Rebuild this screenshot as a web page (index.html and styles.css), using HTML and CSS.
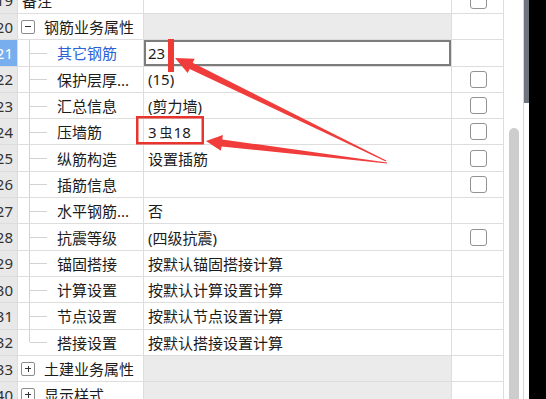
FILE: index.html
```html
<!DOCTYPE html>
<html lang="zh-CN">
<head>
   <meta charset="UTF-8">
   <meta name="viewport" content="width=device-width, initial-scale=1.0">
   <title>属性编辑</title>
   <link rel="stylesheet" href="styles.css">
</head>
<body>
    <div class="page">
        <!-- property grid -->
        <div class="grid">
            <div class="row">
                <div class="num">19</div>
                <div class="name top">备注</div>
                <div class="val"></div>
                <div class="chk"><span class="box"></span></div>
            </div>
            <div class="row group">
                <div class="num">20</div>
                <div class="name"><span class="tog"></span>钢筋业务属性</div>
                <div class="val"></div>
                <div class="chk"></div>
            </div>
            <div class="row child sel">
                <div class="num">21</div>
                <div class="name">其它钢筋</div>
                <div class="val edit">23</div>
                <div class="chk"></div>
            </div>
            <div class="row child">
                <div class="num">22</div>
                <div class="name">保护层厚...</div>
                <div class="val">(15)</div>
                <div class="chk"><span class="box"></span></div>
            </div>
            <div class="row child">
                <div class="num">23</div>
                <div class="name">汇总信息</div>
                <div class="val">(剪力墙)</div>
                <div class="chk"><span class="box"></span></div>
            </div>
            <div class="row child">
                <div class="num">24</div>
                <div class="name">压墙筋</div>
                <div class="val">3<span class="bar">虫</span>18</div>
                <div class="chk"><span class="box"></span></div>
            </div>
            <div class="row child">
                <div class="num">25</div>
                <div class="name">纵筋构造</div>
                <div class="val">设置插筋</div>
                <div class="chk"><span class="box"></span></div>
            </div>
            <div class="row child">
                <div class="num">26</div>
                <div class="name">插筋信息</div>
                <div class="val"></div>
                <div class="chk"><span class="box"></span></div>
            </div>
            <div class="row child">
                <div class="num">27</div>
                <div class="name">水平钢筋...</div>
                <div class="val">否</div>
                <div class="chk"></div>
            </div>
            <div class="row child">
                <div class="num">28</div>
                <div class="name">抗震等级</div>
                <div class="val">(四级抗震)</div>
                <div class="chk"><span class="box"></span></div>
            </div>
            <div class="row child">
                <div class="num">29</div>
                <div class="name">锚固搭接</div>
                <div class="val">按默认锚固搭接计算</div>
                <div class="chk"></div>
            </div>
            <div class="row child">
                <div class="num">30</div>
                <div class="name">计算设置</div>
                <div class="val">按默认计算设置计算</div>
                <div class="chk"></div>
            </div>
            <div class="row child">
                <div class="num">31</div>
                <div class="name">节点设置</div>
                <div class="val">按默认节点设置计算</div>
                <div class="chk"></div>
            </div>
            <div class="row child last">
                <div class="num">32</div>
                <div class="name">搭接设置</div>
                <div class="val">按默认搭接设置计算</div>
                <div class="chk"></div>
            </div>
            <div class="row group">
                <div class="num">33</div>
                <div class="name"><span class="tog plus"></span>土建业务属性</div>
                <div class="val"></div>
                <div class="chk"></div>
            </div>
            <div class="row group">
                <div class="num">40</div>
                <div class="name"><span class="tog plus"></span>显示样式</div>
                <div class="val"></div>
                <div class="chk"></div>
            </div>
        </div>

        <div class="gutter"></div>
        <div class="vscroll"><div class="thumb"></div></div>
        <div class="gap"></div>
        <div class="rule"></div>
        <div class="edge"><div class="split"></div></div>
        <div class="outside"></div>

        <!-- red annotations -->
        <svg class="marks" width="546" height="399" viewBox="0 0 546 399">
            <rect x="168" y="39" width="6" height="33" fill="#f03a36"/>
            <rect x="137.25" y="117.25" width="65.5" height="26" fill="none" stroke="#e8342f" stroke-width="2.5"/>
            <polygon fill="#f03c3a" points="175,58 194.7,58.7 192.7,62.8 386.3,160.6 385.7,161.4 189.7,69 187.7,73.1"/>
            <polygon fill="#f03c3a" points="206,141 222.9,135 222.3,139.4 387,162.6 387,163.4 221.5,146.4 220.9,150.8"/>
        </svg>
    </div>
</body>
</html>
```

FILE: styles.css
```css
body {
    margin: 0;
    background-color: #fff;
    font-family: "Noto Sans", "Noto Sans CJK SC", sans-serif;
    font-size: 15px;
    color: #1c1c1c;
}
.page {
    position: relative;
    display: flex;
    width: 546px;
    height: 399px;
    overflow: hidden;
}
.grid {
    width: 504px;
    flex: none;
    margin-top: -12.3px;
}
.row {
    display: grid;
    grid-template-columns: 18px 126px 308px 52px;
    height: 26.3px;
    box-sizing: border-box;
    border-bottom: 1px solid #dddddd;
}
.row > div {
    display: flex;
    align-items: center;
    border-right: 1px solid #dddddd;
    white-space: nowrap;
    overflow: hidden;
}
.num {
    justify-content: flex-end;
    padding-right: 4px;
    background-color: #e8e8e8;
    color: #333;
}
.sel .num {
    background-color: #78aeee;
    color: #fff;
}
.name {
    position: relative;
    padding-left: 3px;
}
.name.top {
    padding-left: 4px;
}
.child .name {
    padding-left: 39px;
}
.sel .name {
    color: #2a62d6;
}
/* tree lines */
.child .name::before {
    content: "";
    position: absolute;
    left: 11px;
    top: 0;
    bottom: 0;
    border-left: 1px solid #d2d2d2;
}
.child.last .name::before {
    bottom: 50%;
}
.child .name::after {
    content: "";
    position: absolute;
    left: 12px;
    width: 17px;
    top: 50%;
    border-top: 1px solid #d2d2d2;
}
.tog {
    position: relative;
    width: 14px;
    height: 14px;
    box-sizing: border-box;
    border: 1px solid #8c8c8c;
    border-radius: 2px;
    margin-right: 9px;
}
.tog::before {
    content: "";
    position: absolute;
    left: 3px;
    top: 5.5px;
    width: 6px;
    border-top: 1px solid #333;
}
.tog.plus::after {
    content: "";
    position: absolute;
    left: 5.5px;
    top: 3px;
    height: 6px;
    border-left: 1px solid #333;
}
.val {
    padding-left: 4px;
}
.group .val {
    background-color: #ebebeb;
}
.val.edit {
    box-shadow: inset 0 0 0 2px #7c7c7c;
}
.bar {
    font-size: 13px;
    margin: 0 1px 0 3px;
}
.chk {
    justify-content: center;
}
.box {
    width: 17px;
    height: 17px;
    box-sizing: border-box;
    border: 1.5px solid #929292;
    border-radius: 3px;
    margin-left: 2px;
}
/* right side */
.gutter {
    width: 5px;
    flex: none;
}
.vscroll {
    width: 10px;
    flex: none;
}
.thumb {
    margin-top: 128px;
    height: 300px;
    background-color: #cdcdcd;
    border-radius: 5px 5px 0 0;
}
.gap {
    width: 4px;
    flex: none;
}
.rule {
    width: 1px;
    flex: none;
    background-color: #d6d6d6;
}
.edge {
    width: 5px;
    flex: none;
}
.split {
    height: 103px;
    background-color: #6e7580;
}
.outside {
    flex: 1;
    background-color: #000;
}
.marks {
    position: absolute;
    top: 0;
    left: 0;
    pointer-events: none;
}
```
